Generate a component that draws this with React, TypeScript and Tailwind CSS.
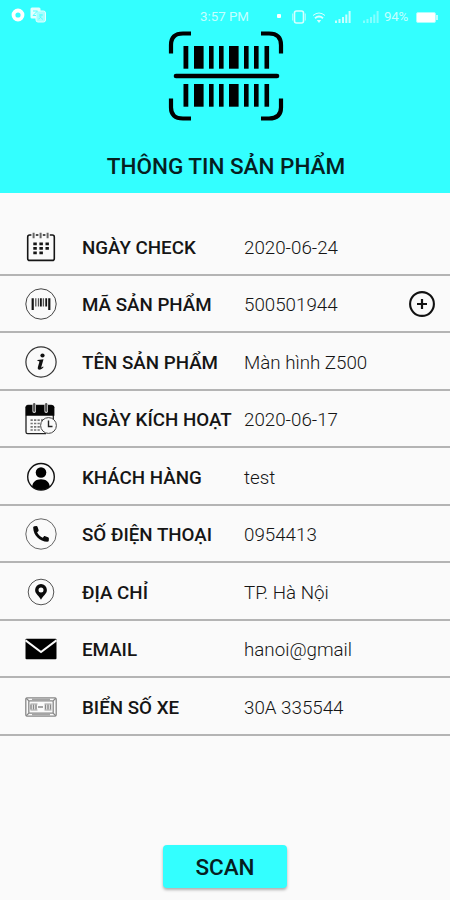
import type { ReactNode } from 'react'

interface InfoRow {
  label: string
  value: string
  icon: ReactNode
  action?: ReactNode
}

function CalendarIcon() {
  return (
    <svg className="h-8 w-8" viewBox="0 0 32 32" fill="none" stroke="#151515">
      <rect x="2.7" y="4" width="26.6" height="25.4" rx="2" strokeWidth="1.6" />
      <path d="M8.6 1.7v5M15.6 1.7v5M22.6 1.7v5" stroke="#fafafa" strokeWidth="4.4" />
      <path d="M8.6 1.7v5.600M15.600 1.700v5.600M22.600 1.700v5.600" stroke="#666" strokeWidth="2" />
      <path d="M8.300 12.900h15.600M8.300 17.400h15.600M8.300 21.900h9.600" strokeWidth="2.700" strokeDasharray="3.500 2.600" />
    </svg>
  )
}

function ProductCodeIcon() {
  return (
    <svg className="h-8 w-8" viewBox="0 0 32 32" fill="none" stroke="#151515">
      <circle cx="16" cy="16" r="15.2" stroke="#444" strokeWidth="1" />
      <path d="M7.7 10.2v11.8M24.3 10.2v11.8" strokeWidth="2.2" />
      <path d="M10.8 10.2v8.3M13.5 10.2v8.3M18.4 10.2v8.3" stroke="#555" strokeWidth="1.3" />
      <path d="M15.9 10.2v8.3M21.2 10.2v8.3" strokeWidth="1.8" />
    </svg>
  )
}

function InfoIcon() {
  return (
    <svg className="h-8 w-8" viewBox="0 0 32 32" fill="#111">
      <circle cx="16" cy="16" r="15.1" fill="none" stroke="#333" strokeWidth="1.2" />
      <circle cx="17.5" cy="9.5" r="2.1" />
      <path d="M12.5 14l6-.7-2.2 7.6c-.3 1 .3 1 1.700-.4l.6.5c-2.800 3.800-6.700 3.500-5.700.1l1.500-5.300c.2-.8-.7-.9-1.900-.9z" />
    </svg>
  )
}

function ScheduleIcon() {
  return (
    <svg className="h-8 w-8" viewBox="0 0 32 32" fill="none">
      <path d="M28.3 18V4.500a2 2 0 0 0-2-2H3a2 2 0 0 0-2 2V29a1.600 1.600 0 0 0 1.600 1.600H21" stroke="#222" strokeWidth="1.3" />
      <path d="M.8 12.800V4.300Q.8 2.300 3 2.300h24.200q2.200 0 2.200 2v8.500z" fill="#050505" />
      <path d="M9.200 1.800v6.400M21.200 1.800v6.400" stroke="#ddd" strokeWidth="3.6" strokeLinecap="round" />
      <path d="M9.200 1.200v6.600M21.200 1.200v6.600" stroke="#555" strokeWidth="2.2" strokeLinecap="round" />
      <path d="M5.500 17.200h14M5.500 20.500h11M5.500 23.800h10M5.500 27h10" stroke="#777" strokeWidth="1.7" strokeDasharray="2.3 1.2" />
      <circle cx="23.5" cy="22.5" r="7.9" fill="#fafafa" stroke="#444" strokeWidth="1" />
      <path d="M23.500 17.500v6h4" stroke="#222" strokeWidth="1.4" />
    </svg>
  )
}

function CustomerIcon() {
  return (
    <svg className="h-8 w-8" viewBox="0 0 32 32">
      <circle cx="16" cy="15.8" r="13.3" fill="none" stroke="#111" strokeWidth="1.4" />
      <circle cx="16" cy="11.5" r="5.3" fill="#000" />
      <path d="M7.200 25.600c.4-4.500 3.800-7.300 8.800-7.300s8.400 2.800 8.800 7.300a13 13 0 0 1-17.600 0z" fill="#000" />
    </svg>
  )
}

function PhoneIcon() {
  return (
    <svg className="h-8 w-8" viewBox="0 0 32 32">
      <circle cx="16" cy="16" r="15.2" fill="none" stroke="#666" strokeWidth="1" />
      <path
        d="M9.400 8.300l2-.2c.6 0 1 .3 1.200.9l1 2.900c.2.6 0 1.100-.5 1.500l-1 .8c1.200 2.700 3 4.400 5.700 5.600l1-1.200c.4-.5.9-.6 1.400-.4l2.800 1.100c.6.2.9.6.9 1.200l-.1 2c-.1.8-.6 1.200-1.400 1.200C14.700 23.400 8.400 17.400 8.200 9.700c0-.8.4-1.300 1.200-1.400z"
        fill="#0a0a0a"
      />
    </svg>
  )
}

function AddressIcon() {
  return (
    <svg className="h-8 w-8" viewBox="0 0 32 32">
      <circle cx="16" cy="16" r="12.8" fill="none" stroke="#555" strokeWidth="1" />
      <path
        fillRule="evenodd"
        d="M16 8.100a5.900 5.900 0 0 0-5.900 5.900c0 4 4.200 6 5.900 9.800 1.700-3.800 5.900-5.800 5.900-9.800A5.900 5.900 0 0 0 16 8.100zm0 3.300a2.500 2.500 0 1 1 0 5 2.500 2.500 0 0 1 0-5z"
        fill="#0a0a0a"
      />
    </svg>
  )
}

function EmailIcon() {
  return (
    <svg className="h-8 w-8" viewBox="0 0 32 32">
      <rect x="0.5" y="5.7" width="31" height="20.5" rx="1" fill="#000" />
      <path d="M.5 7.300L16 19 31.500 7.300" fill="none" stroke="#fafafa" strokeWidth="2" />
    </svg>
  )
}

function PlateIcon() {
  return (
    <svg className="h-8 w-8" viewBox="0 0 32 32" fill="none" stroke="#888">
      <rect x="0.8" y="6.8" width="30.4" height="18.4" rx="1.5" strokeWidth="1.3" />
      <rect x="3.8" y="9.8" width="24.4" height="12.4" rx="1" strokeWidth="1.3" />
      <path d="M1 7l3 3M31 7l-3 3M1 25l3-3M31 25l-3-3M7 8.300h18M7 23.700h18" strokeWidth="1.1" />
      <path d="M6 13.500v5M8.500 13.500v5M11 13.500v5M13 16h5M20.500 13.500v5M23 13.500v5M25.500 13.500v5" strokeWidth="1.5" />
      <path d="M5.500 13h7M5.500 19h7M19.500 13h7M19.500 19h7" strokeWidth=".8" />
    </svg>
  )
}

function AddIcon() {
  return (
    <svg className="h-7 w-7" viewBox="0 0 28 28" fill="none" stroke="#111">
      <circle cx="14" cy="14" r="11.9" strokeWidth="2.1" />
      <path d="M14 9v10M9 14h10" strokeWidth="2.2" />
    </svg>
  )
}

function ScanLogo() {
  return (
    <svg className="h-[92px] w-[116px]" viewBox="0 0 116 92" fill="none" stroke="#000">
      <path
        d="M23 3.500H15Q3 3.500 3 15v8.500M93 3.500h8Q113 3.500 113 15v8.500M23 88.500H15Q3 88.500 3 77.500v-9M93 88.500h8q12 0 12-11v-9"
        strokeWidth="4.2"
      />
      <path d="M8 46h101" strokeWidth="4.6" strokeLinecap="round" />
      <g fill="#000" stroke="none">
        {[16, 54].map((y) => (
          <g key={y}>
            <rect x="15.5" y={y} width="4.8" height="22.7" />
            <rect x="26" y={y} width="9.6" height="22.7" />
            <rect x="41" y={y} width="4.6" height="22.7" />
            <rect x="51" y={y} width="4.6" height="22.7" />
            <rect x="61" y={y} width="9.6" height="22.7" />
            <rect x="76" y={y} width="4.6" height="22.7" />
            <rect x="86" y={y} width="4.6" height="22.7" />
            <rect x="96.500" y={y} width="4.6" height="22.7" />
          </g>
        ))}
      </g>
    </svg>
  )
}

function StatusBar() {
  return (
    <div className="flex h-[30px] items-center pt-1 text-[13.3px] text-[#c4ffff]">
      <svg className="-mt-1 ml-[11px] h-[14px] w-[14px]" viewBox="0 0 14 14">
        <circle cx="7" cy="7" r="4.5" fill="none" stroke="#fff" strokeWidth="3.8" />
      </svg>
      <svg className="-mt-1 ml-[5px] h-4 w-4" viewBox="0 0 16 16">
        <rect x="0.5" y="0.5" width="10" height="11" rx="1.5" fill="#e4ffff" />
        <rect x="6" y="4" width="9.5" height="11" rx="2" fill="#a5ffff" stroke="#e4ffff" />
        <path d="M3 4h4.500L3 8.500h3M9 8h4M11 7v1c0 2-1 3.500-2.500 4M9.500 9.500l3.500 3" fill="none" stroke="#53ffff" />
      </svg>
      <span className="ml-[154px] w-[53px] whitespace-nowrap">3:57 PM</span>
      <span className="-mt-0.5 ml-[24px] h-1 w-1 rounded-[1px] bg-white" />
      <svg className="ml-[11px] h-4 w-[14px]" viewBox="0 0 14 16" fill="none" stroke="#d8ffff">
        <rect x="2.5" y="2" width="9" height="12" rx="2" strokeWidth="1.6" />
        <path d="M.7 4.500v7M13.300 4.500v7" strokeWidth=".8" />
      </svg>
      <svg className="ml-[6px] h-[13px] w-[14px]" viewBox="0 0 14 13" fill="none" stroke="#d8ffff">
        <path d="M1 4.500q6-5 12 0" strokeWidth="1" />
        <path d="M3 7.300q4-3.500 8 0" strokeWidth="1.8" />
        <path d="M4.800 9h4.400L7 12z" fill="#d8ffff" stroke="none" />
      </svg>
      <svg className="ml-[9px] h-3 w-4" viewBox="0 0 16 12" fill="#c8ffff">
        <path d="M0 9.500h2V12H0zM3.500 8h2v4h-2zM7 6h2v6H7zM10.300 3.500h2V12h-2zM13.600 0h2v12h-2z" />
      </svg>
      <svg className="ml-[12px] h-3 w-4" viewBox="0 0 16 12" fill="#84ffff">
        <path d="M0 9.500h2V12H0zM3.500 8h2v4h-2zM7 6h2v6H7zM10.300 3.500h2V12h-2zM13.600 0h2v12h-2z" />
      </svg>
      <span className="ml-[5px] w-[26px] tracking-[-0.2px]">94%</span>
      <svg className="ml-[6px] h-[11px] w-[23px]" viewBox="0 0 23 11">
        <rect x="0.5" y="0.5" width="19" height="10" rx="1.5" fill="#fff" stroke="#a8ffff" />
        <rect x="20" y="3" width="2" height="5" fill="#b8ffff" />
      </svg>
    </div>
  )
}

const rows: InfoRow[] = [
  { label: 'NGÀY CHECK', value: '2020-06-24', icon: <CalendarIcon /> },
  { label: 'MÃ SẢN PHẨM', value: '500501944', icon: <ProductCodeIcon />, action: <AddIcon /> },
  { label: 'TÊN SẢN PHẨM', value: 'Màn hình Z500', icon: <InfoIcon /> },
  { label: 'NGÀY KÍCH HOẠT', value: '2020-06-17', icon: <ScheduleIcon /> },
  { label: 'KHÁCH HÀNG', value: 'test', icon: <CustomerIcon /> },
  { label: 'SỐ ĐIỆN THOẠI', value: '0954413', icon: <PhoneIcon /> },
  { label: 'ĐỊA CHỈ', value: 'TP. Hà Nội', icon: <AddressIcon /> },
  { label: 'EMAIL', value: 'hanoi@gmail', icon: <EmailIcon /> },
  { label: 'BIỂN SỐ XE', value: '30A 335544', icon: <PlateIcon /> },
]

export default function App() {
  return (
    <div className="flex h-[900px] w-[450px] flex-col overflow-hidden bg-[#fafafa] font-['Roboto',sans-serif]">
      <header className="flex h-[193px] flex-col bg-[#33ffff]">
        <StatusBar />
        <div className="flex flex-col items-center pl-[2px]">
          <ScanLogo />
          <h1 className="mt-[28px] text-[22.5px] leading-[32px] font-medium text-[#06201f]">
            THÔNG TIN SẢN PHẨM
          </h1>
        </div>
      </header>

      <main className="mt-[25px]">
        {rows.map((row) => (
          <div
            key={row.label}
            className="flex h-[57.5px] items-center border-b-2 border-[#b4b4b4] pt-[1px] pl-[25px] text-[18.75px]"
          >
            <span className="shrink-0 pt-[1px]">{row.icon}</span>
            <span className="ml-[25px] w-[162px] shrink-0 pt-[3px] whitespace-nowrap font-medium text-[#151515]">
              {row.label}
            </span>
            <span className="pt-[3px] whitespace-nowrap font-light text-[#151515]">{row.value}</span>
            {row.action && <button className="mr-[14px] ml-auto">{row.action}</button>}
          </div>
        ))}
      </main>

      <button className="mx-auto mt-[109px] h-[43px] w-[124px] rounded-[4px] bg-[#33ffff] pt-[3px] text-[22.5px] font-medium text-[#06201f] shadow-[0_2px_3px_rgba(0,0,0,0.3)]">
        SCAN
      </button>
    </div>
  )
}
